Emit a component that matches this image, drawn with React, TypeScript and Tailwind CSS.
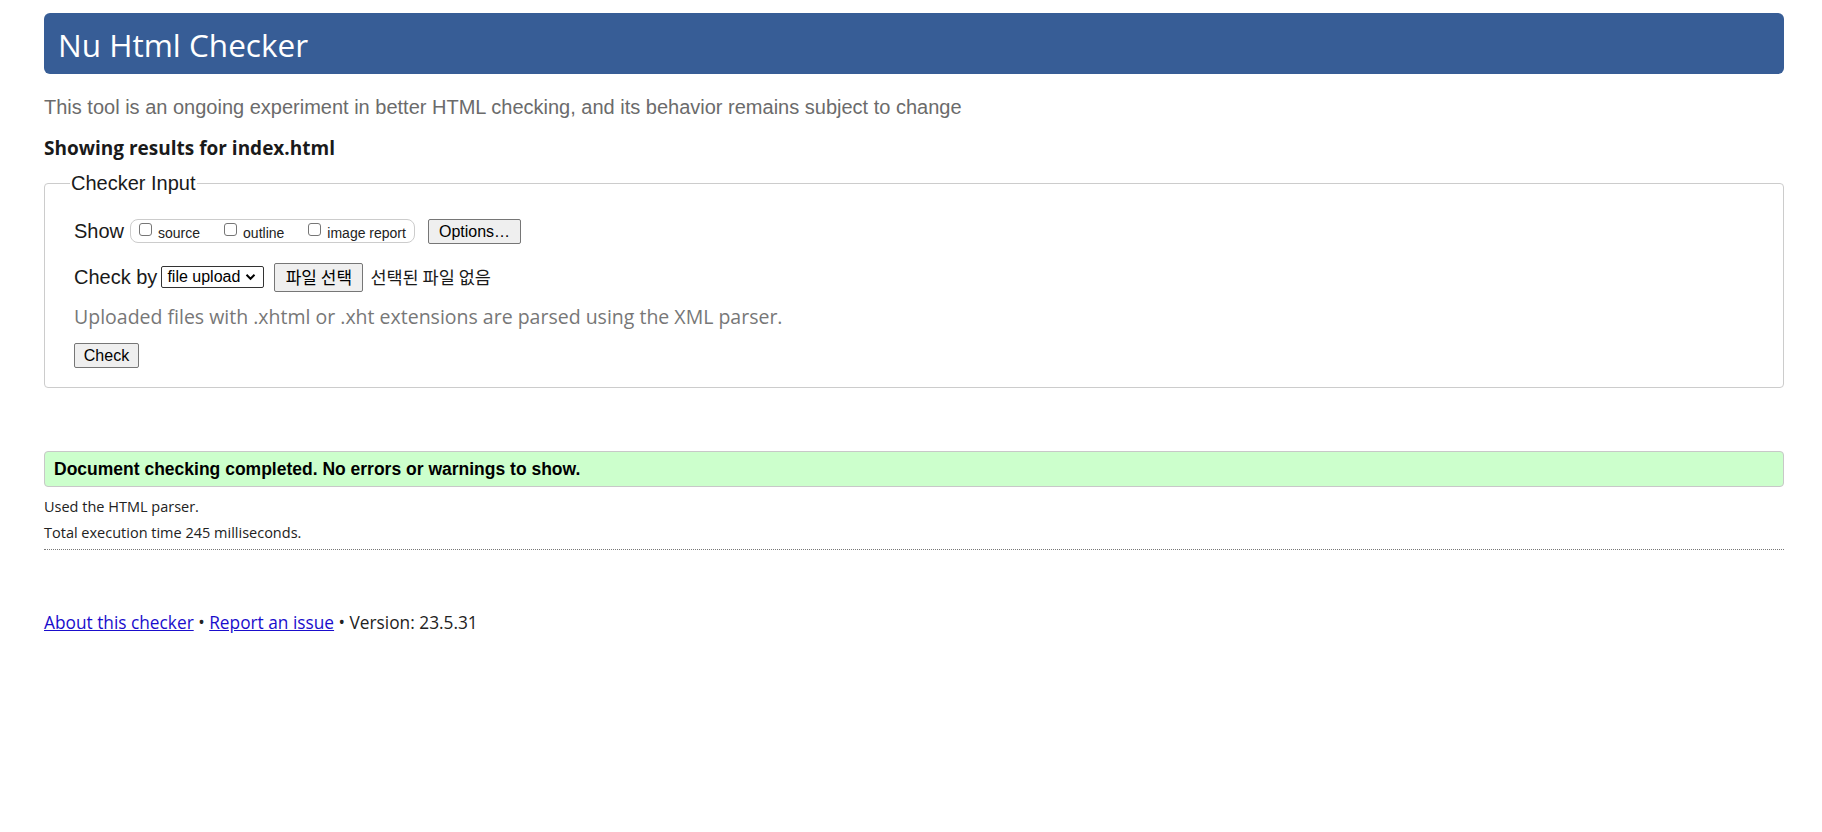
import React from 'react';

const arial = "font-['Liberation_Sans',Arial,sans-serif]";
const malgun = "font-['Open_Sans','Noto_Sans_CJK_KR',sans-serif]";
const korean = "font-['Noto_Sans_CJK_KR',sans-serif]";

const Checkbox: React.FC<{ label: string }> = ({ label }) => (
  <span className="flex items-center">
    <span className="w-[13px] h-[13px] border border-[#767676] rounded-[3px] bg-white -translate-y-[2px]" />
    <span className={`${arial} text-[14px] text-[#222] ml-[6px] translate-y-[2px]`}>{label}</span>
  </span>
);

const NativeButton: React.FC<{ children: React.ReactNode; className?: string }> = ({ children, className }) => (
  <button className={`bg-[#efefef] border border-[#767676] rounded-[2px] text-black ${className || ''}`}>
    {children}
  </button>
);

export default function App() {
  return (
    <div className="min-h-[832px] bg-white pt-[13px] pl-[44px] pr-[38px]">
      {/* Header */}
      <div className="h-[61px] rounded-[6px] bg-[#375d96] flex items-center pl-[14px]">
        <h1 className={`${malgun} text-[31.5px] text-white leading-none translate-y-[1px]`}>Nu Html Checker</h1>
      </div>

      <p className={`${arial} mt-[21px] h-[24px] leading-[24px] text-[20px] text-[#6b6b6b]`}>
        This tool is an ongoing experiment in better HTML checking, and its behavior remains subject to change
      </p>

      <p className={`${malgun} mt-[17px] h-[24px] leading-[24px] text-[19px] font-bold text-[#1a1a1a]`}>
        Showing results for index.html
      </p>

      {/* Checker input */}
      <fieldset className="mt-[12px] border border-[#cccccc] rounded-[4px] pb-[19px]">
        <legend className={`${arial} ml-[25px] px-[1px] text-[20px] leading-[23px] text-[#1a1a1a]`}>
          Checker Input
        </legend>

        <div className="pl-[29px]">
          <div className="mt-[23px] h-[26px] flex items-center">
            <span className={`${arial} text-[20px] text-[#1a1a1a]`}>Show</span>
            <div className="ml-[6px] h-[24px] w-[285px] border border-[#cccccc] rounded-[8px] flex items-center pl-[8px] gap-[24px]">
              <Checkbox label="source" />
              <Checkbox label="outline" />
              <Checkbox label="image report" />
            </div>
            <NativeButton className={`${arial} ml-[13px] h-[25px] w-[93px] text-[16px]`}>Options…</NativeButton>
          </div>

          <div className="mt-[18px] h-[30px] flex items-center">
            <span className={`${arial} text-[20px] text-[#1a1a1a]`}>Check by</span>
            <span className={`${arial} ml-[4px] h-[22px] w-[103px] border border-[#333] rounded-[2px] bg-white flex items-center pl-[5px] text-[16px] text-black`}>
              file upload
              <svg className="ml-[5px]" width="11" height="8" viewBox="0 0 11 8" fill="none">
                <path d="M1.5 1.8 L5.5 5.8 L9.5 1.8" stroke="#000" strokeWidth="2" />
              </svg>
            </span>
            <NativeButton className={`${korean} ml-[10px] h-[29px] w-[89px] text-[17px]`}>파일 선택</NativeButton>
            <span className={`${korean} ml-[7px] text-[17.5px] text-[#1a1a1a]`}>선택된 파일 없음</span>
          </div>

          <p className={`${malgun} mt-[13px] h-[24px] leading-[24px] text-[19.5px] text-[#777777]`}>
            Uploaded files with .xhtml or .xht extensions are parsed using the XML parser.
          </p>

          <NativeButton className={`${arial} mt-[14px] h-[25px] w-[65px] text-[16px]`}>Check</NativeButton>
        </div>
      </fieldset>

      {/* Result */}
      <div className="mt-[63px] h-[36px] bg-[#ccffcc] border border-[#c8c8c8] rounded-[4px] flex items-center pl-[9px]">
        <span className={`${arial} text-[17.5px] font-bold text-black`}>
          Document checking completed. No errors or warnings to show.
        </span>
      </div>

      <div className={`${malgun} mt-[7px] text-[14.5px] leading-[26px] text-[#222]`}>
        <p>Used the HTML parser.</p>
        <p>Total execution time 245 milliseconds.</p>
      </div>
      <div className="mt-[3px] border-b border-dotted border-[#777]" />

      {/* Footer */}
      <p className={`${malgun} mt-[60px] text-[17.3px] leading-[26px] text-[#222]`}>
        <a href="#" className="text-[#1a0dcc] underline">About this checker</a>
        {' • '}
        <a href="#" className="text-[#1a0dcc] underline">Report an issue</a>
        {' • Version: 23.5.31'}
      </p>
    </div>
  );
}
